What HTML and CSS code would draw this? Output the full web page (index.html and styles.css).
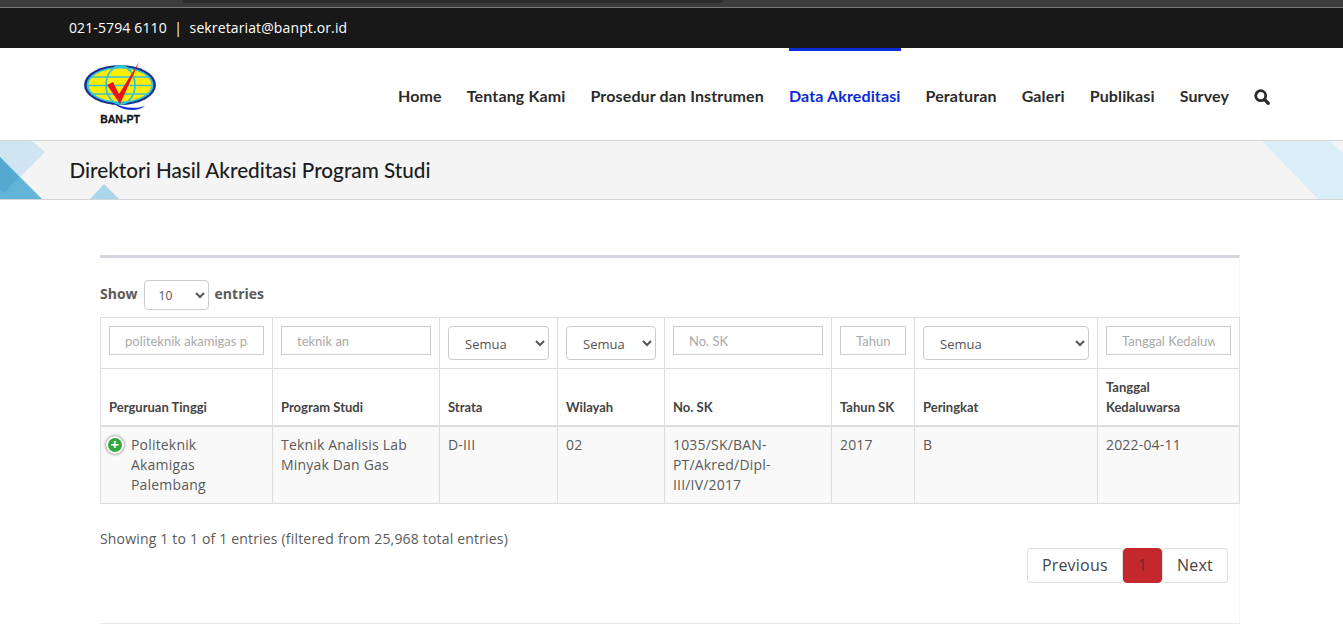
FILE: index.html
```html
<!DOCTYPE html>
<html lang="en">

<head>
    <meta charset="UTF-8">
    <meta name="viewport" content="width=device-width, initial-scale=1.0">
    <title>Direktori Hasil Akreditasi Program Studi</title>
    <link rel="stylesheet" href="styles.css">
</head>

<body>
    <div class="browser-strip"><div class="browser-tab"></div></div>

    <div class="topbar">021-5794 6110 &nbsp;|&nbsp; sekretariat@banpt.or.id</div>

    <header class="navbar">
        <a class="logo" href="#">
            <svg width="74" height="66" viewBox="0 0 74 66">
                <ellipse cx="37" cy="24" rx="36" ry="20" fill="#1b2f8f" />
                <ellipse cx="37" cy="24" rx="33.500" ry="18" fill="#35c4d8" />
                <ellipse cx="37" cy="24" rx="31.500" ry="16.500" fill="#ffee00" />
                <path d="M8 16H66M4 24.500H70M8 33H66" stroke="#35c4d8" stroke-width="1.600" fill="none" />
                <ellipse cx="37.500" cy="24" rx="14.500" ry="19" fill="none" stroke="#35c4d8" stroke-width="1.800" />
                <path d="M28 41C38 46 50 49 62 45C56 50 44 50 36 46Z" fill="#1030d0" />
                <path d="M24 24L30 21L36 33L56 1L37 43Z" fill="#e8131a" />
                <text x="37" y="62" class="logo-text" text-anchor="middle">BAN-PT</text>
            </svg>
        </a>
        <nav class="menu">
            <a href="#">Home</a>
            <a href="#">Tentang Kami</a>
            <a href="#">Prosedur dan Instrumen</a>
            <a href="#" class="active">Data Akreditasi</a>
            <a href="#">Peraturan</a>
            <a href="#">Galeri</a>
            <a href="#">Publikasi</a>
            <a href="#">Survey</a>
            <svg class="search-icon" width="16" height="16" viewBox="0 0 16 16">
                <circle cx="6.700" cy="6.700" r="5" fill="none" stroke="#2b2b2b" stroke-width="2.800" />
                <path d="M10.500 10.500L14.300 14.300" stroke="#2b2b2b" stroke-width="3.200" stroke-linecap="round" />
            </svg>
        </nav>
    </header>

    <section class="banner">
        <svg class="banner-art" width="1343" height="58" viewBox="0 0 1343 58">
            <path d="M0 0H32L45 11L15 41L0 26Z" fill="#cfe6f2" />
            <path d="M0 16L42 58H0Z" fill="#62b4d8" />
            <path d="M0 16L19 36L4 52L0 48Z" fill="#55a8cf" />
            <path d="M90 58L104 43L119 58Z" fill="#a9d6ea" />
            <path d="M1262 0H1330L1343 12V58H1318Z" fill="#d9eef6" />
        </svg>
        <h1>Direktori Hasil Akreditasi Program Studi</h1>
    </section>

    <main class="panel">
        <div class="length-row">
            <b>Show</b>
            <select class="length-select">
                <option>10</option>
            </select>
            <b>entries</b>
        </div>

        <table class="data-table">
            <colgroup>
                <col class="c1">
                <col class="c2">
                <col class="c3">
                <col class="c4">
                <col class="c5">
                <col class="c6">
                <col class="c7">
                <col class="c8">
            </colgroup>
            <thead>
                <tr class="filter-row">
                    <td><input type="text" value="politeknik akamigas pa"></td>
                    <td><input type="text" value="teknik an"></td>
                    <td><select><option>Semua</option></select></td>
                    <td><select><option>Semua</option></select></td>
                    <td><input type="text" placeholder="No. SK"></td>
                    <td><input type="text" placeholder="Tahun"></td>
                    <td><select><option>Semua</option></select></td>
                    <td><input type="text" placeholder="Tanggal Kedaluwarsa"></td>
                </tr>
                <tr class="head-row">
                    <th>Perguruan Tinggi</th>
                    <th>Program Studi</th>
                    <th>Strata</th>
                    <th>Wilayah</th>
                    <th>No. SK</th>
                    <th>Tahun SK</th>
                    <th>Peringkat</th>
                    <th>Tanggal<br>Kedaluwarsa</th>
                </tr>
            </thead>
            <tbody>
                <tr>
                    <td class="first-cell"><span class="expand">+</span>Politeknik Akamigas Palembang</td>
                    <td>Teknik Analisis Lab Minyak Dan Gas</td>
                    <td>D-III</td>
                    <td>02</td>
                    <td>1035/SK/BAN-PT/Akred/Dipl-III/IV/2017</td>
                    <td>2017</td>
                    <td>B</td>
                    <td>2022-04-11</td>
                </tr>
            </tbody>
        </table>

        <div class="table-info">Showing 1 to 1 of 1 entries (filtered from 25,968 total entries)</div>

        <div class="pagination">
            <a href="#" class="page-btn">Previous</a>
            <a href="#" class="page-btn current">1</a>
            <a href="#" class="page-btn">Next</a>
        </div>
    </main>
</body>

</html>
```
FILE: styles.css
```css
* {
    box-sizing: border-box;
}

html,
body {
    height: 643px;
    overflow: hidden;
}

body {
    margin: 0;
    font-family: "Open Sans", Arial, sans-serif;
    font-size: 14px;
    color: #5a5a5a;
    background-color: #fff;
}

a {
    text-decoration: none;
}

.browser-strip {
    height: 8px;
    background-color: #3c3c3c;
    border-bottom: 1px solid #7a7a7a;
}

.browser-tab {
    width: 540px;
    height: 3px;
    margin-left: 183px;
    background-color: #2c2c2c;
}

.topbar {
    height: 40px;
    padding-left: 69px;
    line-height: 40px;
    font-size: 14px;
    letter-spacing: 0.120px;
    color: #fff;
    background-color: #181818;
}

.navbar {
    display: flex;
    justify-content: space-between;
    height: 92px;
    padding: 0 73px 0 83px;
    background-color: #fff;
}

.logo {
    padding-top: 13px;
}

.logo-text {
    font-family: "Liberation Sans", Arial, sans-serif;
    font-size: 10.500px;
    font-weight: bold;
    fill: #111;
    stroke: #111;
    stroke-width: 0.300px;
}

.menu {
    display: flex;
    align-items: center;
    gap: 25px;
}

.menu a {
    display: flex;
    align-items: center;
    height: 100%;
    font-family: Lato, Arial, sans-serif;
    font-size: 16px;
    font-weight: 700;
    letter-spacing: 0.130px;
    color: #2b2b2b;
    border-top: 3px solid transparent;
}

.menu a.active {
    color: #0a2bd6;
    border-top-color: #0a2bd6;
}

.search-icon {
    margin-top: 6px;
}

.banner {
    position: relative;
    height: 60px;
    background-color: #f4f4f5;
    border-top: 1px solid #d4d4d4;
    border-bottom: 1px solid #d4d4d4;
}

.banner-art {
    position: absolute;
    top: 0;
    left: 0;
}

.banner h1 {
    position: relative;
    margin: 0;
    padding-left: 69.500px;
    font-family: Lato, Arial, sans-serif;
    font-size: 20.700px;
    font-weight: 500;
    line-height: 58px;
    color: #1c1c1c;
}

.panel {
    width: 1140px;
    height: 369px;
    margin: 55px 0 0 100px;
    background-color: #fff;
    border-top: 3px solid #d5d5de;
    border-bottom: 1px solid #e8e8e8;
    border-right: 1px solid #f4f4f4;
}

.length-row {
    display: flex;
    align-items: center;
    gap: 6px;
    height: 30px;
    margin-top: 22px;
}

.length-row b {
    margin-bottom: 3px;
}

.length-select {
    width: 65px;
    height: 30px;
    padding-left: 10px;
    font-family: "Open Sans", Arial, sans-serif;
    font-size: 12px;
    color: #555;
    background-color: #fff;
    border: 1px solid #ccc;
    border-radius: 4px;
}

.data-table {
    width: 1139px;
    margin-top: 7px;
    table-layout: fixed;
    border-collapse: collapse;
    letter-spacing: 0.180px;
}

.c1 { width: 172px; }
.c2 { width: 167px; }
.c3 { width: 118px; }
.c4 { width: 107px; }
.c5 { width: 167px; }
.c6 { width: 83px; }
.c7 { width: 183px; }
.c8 { width: 142px; }

.data-table th,
.data-table td {
    padding: 8px;
    text-align: left;
    vertical-align: top;
    line-height: 20px;
    border: 1px solid #ddd;
}

.filter-row td {
    height: 51px;
}

.filter-row input {
    display: block;
    width: 100%;
    height: 29px;
    padding: 0 15px;
    font-family: Lato, Arial, sans-serif;
    font-size: 13px;
    color: #aaa;
    border: 1px solid #ccc;
    outline: none;
}

.filter-row input::placeholder {
    color: #aaa;
}

.filter-row select {
    display: block;
    width: 100%;
    height: 34px;
    padding: 2px 0 0 12px;
    font-family: "Open Sans", Arial, sans-serif;
    font-size: 13px;
    color: #555;
    background-color: #fff;
    border: 1px solid #ccc;
    border-radius: 4px;
}

.data-table th {
    height: 57px;
    vertical-align: bottom;
    font-family: Lato, Arial, sans-serif;
    font-size: 13px;
    font-weight: 700;
    letter-spacing: 0;
    color: #444;
    border-bottom: 2px solid #ddd;
}

.data-table tbody td {
    height: 77px;
    background-color: #f9f9f9;
}

.data-table .first-cell {
    position: relative;
    padding: 8px 12px 8px 30px;
}

.expand {
    position: absolute;
    top: 9px;
    left: 5px;
    width: 18px;
    height: 18px;
    font-size: 15px;
    font-weight: 700;
    line-height: 13px;
    text-align: center;
    color: #fff;
    background-color: #31a838;
    border: 2px solid #fff;
    border-radius: 50%;
    box-shadow: 0 0 3px #555;
}

.table-info {
    height: 19px;
    margin-top: 25px;
    line-height: 20px;
    letter-spacing: 0.180px;
}

.pagination {
    display: flex;
    justify-content: flex-end;
    margin-right: 11px;
}

.page-btn {
    height: 35px;
    padding: 0 14px;
    font-size: 16px;
    line-height: 33px;
    letter-spacing: 0.200px;
    color: #444;
    background-color: #fff;
    border: 1px solid #ddd;
    border-radius: 3px;
}

.page-btn.current {
    color: #7a2327;
    background-color: #c4282d;
    border-color: #c4282d;
    border-radius: 4px;
}
```
